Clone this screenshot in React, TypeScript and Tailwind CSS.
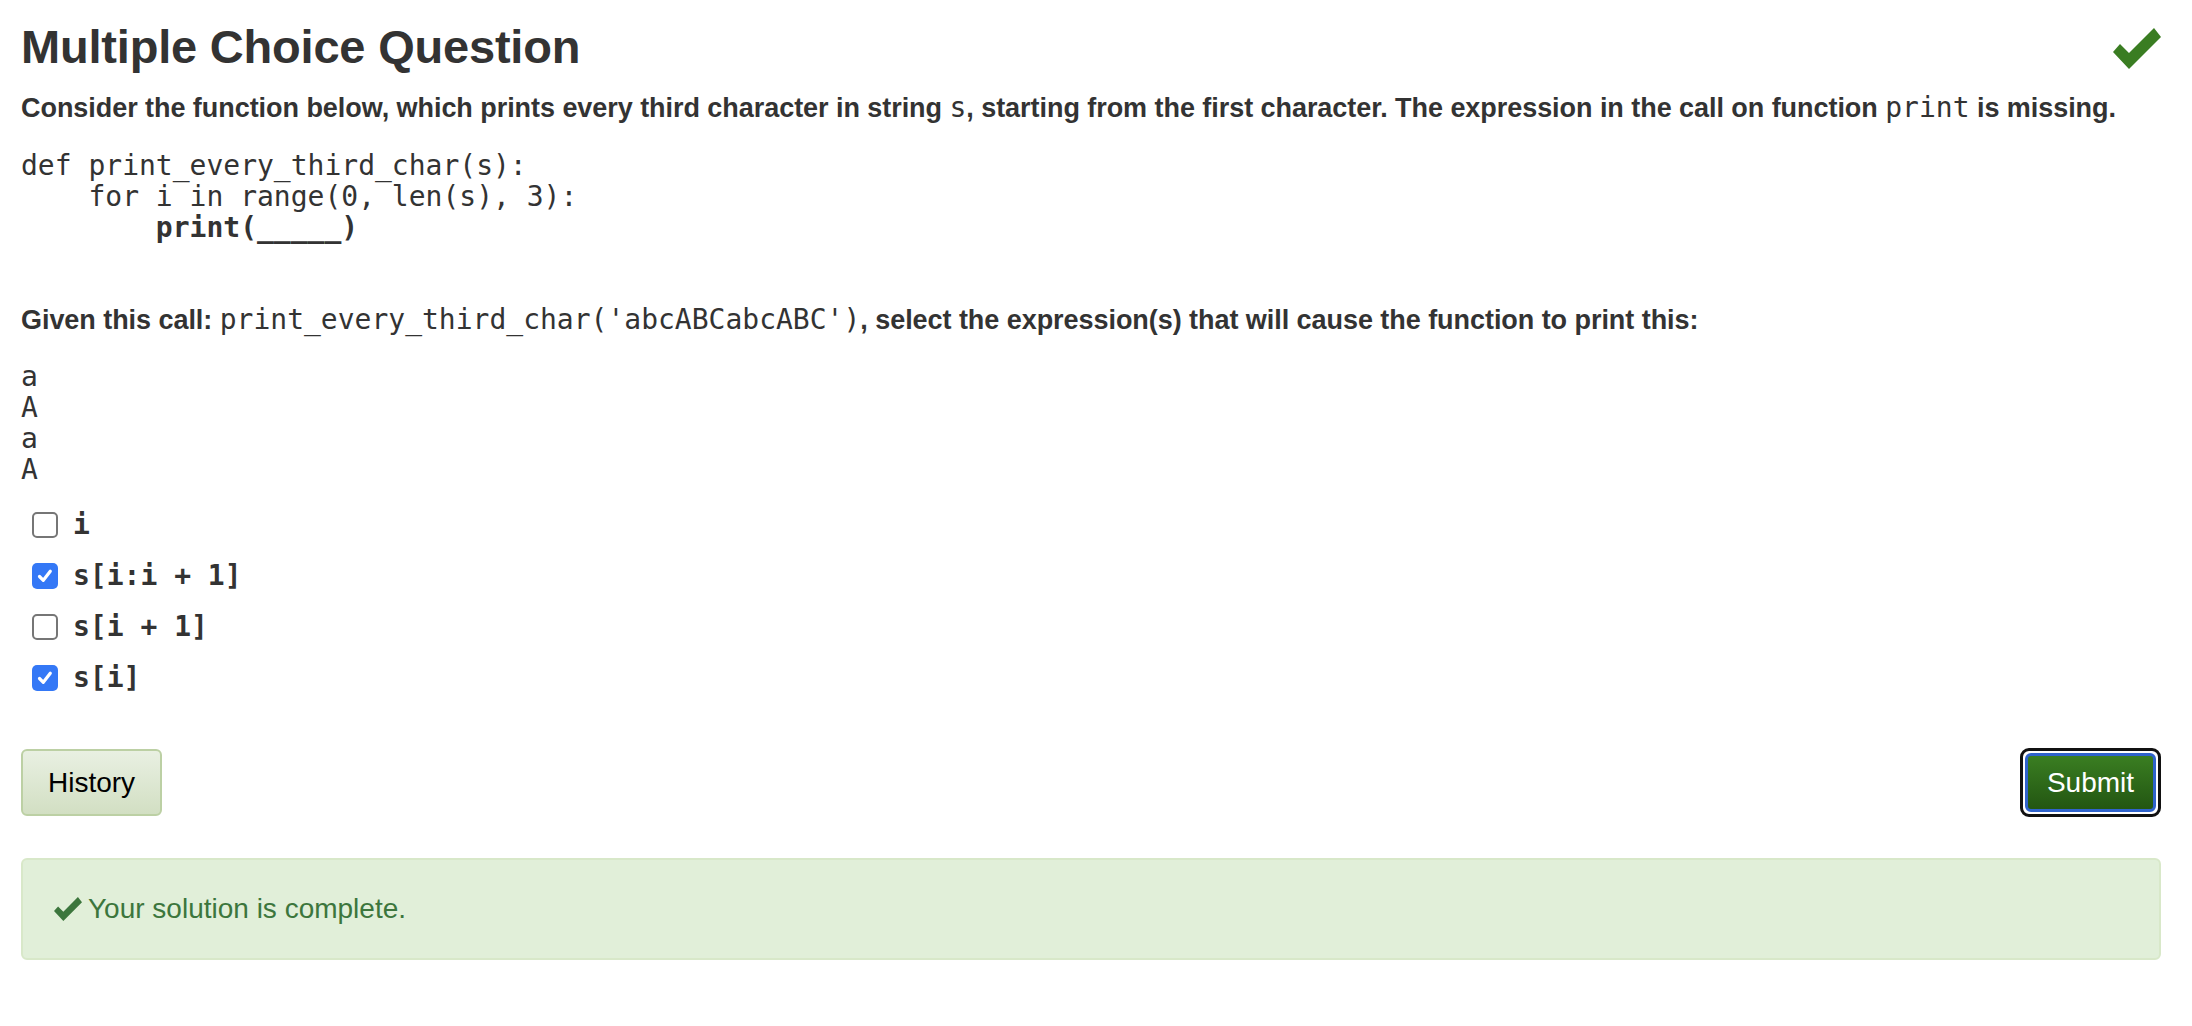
import React from "react";

const sans = { fontFamily: '"Liberation Sans", Arial, Helvetica, sans-serif' };
const mono = { fontFamily: '"DejaVu Sans Mono", "Liberation Mono", monospace' };

function BigCheck() {
  return (
    <svg width="48" height="41" viewBox="0 0 48 41" className="mt-[9px]">
      <polygon points="7,16 0,24 16,41 48,9 41,0 16,25" fill="#3a7d22" />
    </svg>
  );
}

function SmallCheck() {
  return (
    <svg width="28" height="24" viewBox="0 0 48 41" className="shrink-0">
      <polygon points="7,16 0,24 16,41 48,9 41,0 16,25" fill="#3c763d" />
    </svg>
  );
}

function Box({ checked }: { checked: boolean }) {
  if (checked) {
    return (
      <span className="flex h-[26px] w-[26px] items-center justify-center rounded-[5px] bg-[#3478f6]">
        <svg width="18" height="18" viewBox="0 0 18 18">
          <path d="M3.5 9.5 L7.3 13.3 L14.3 4.3" stroke="white" strokeWidth="3.2" fill="none" strokeLinecap="round" strokeLinejoin="round" />
        </svg>
      </span>
    );
  }
  return <span className="block h-[26px] w-[26px] rounded-[5px] border-2 border-[#767676] bg-white" />;
}

const options = [
  { label: "i", checked: false },
  { label: "s[i:i + 1]", checked: true },
  { label: "s[i + 1]", checked: false },
  { label: "s[i]", checked: true },
];

export default function App() {
  return (
    <div className="min-h-screen bg-white pl-[21px] pr-[31px] pt-[19px] text-[#333]" style={sans}>
      <div className="flex items-start justify-between">
        <h1 className="text-[47px] font-bold leading-[56px] tracking-[-0.2px]">Multiple Choice Question</h1>
        <BigCheck />
      </div>

      <p className="mt-[17px] text-[27px] font-bold leading-[32px] tracking-[-0.05px]">
        Consider the function below, which prints every third character in string{" "}
        <code className="text-[28px] font-normal tracking-normal" style={mono}>s</code>, starting from the first character. The
        expression in the call on function{" "}
        <code className="text-[28px] font-normal tracking-normal" style={mono}>print</code> is missing.
      </p>

      <pre className="mt-[26px] text-[28px] leading-[31px]" style={mono}>
        {"def print_every_third_char(s):\n    for i in range(0, len(s), 3):\n        "}
        <b>print(_____)</b>
      </pre>

      <p className="mt-[61px] text-[27px] font-bold leading-[32px] tracking-[-0.05px]">
        Given this call:{" "}
        <code className="text-[28px] font-normal tracking-normal" style={mono}>print_every_third_char('abcABCabcABC')</code>,
        select the expression(s) that will cause the function to print this:
      </p>

      <pre className="mt-[25px] text-[28px] leading-[31px]" style={mono}>
        {"a\nA\na\nA"}
      </pre>

      <div className="mt-[14px] flex flex-col">
        {options.map((o) => (
          <label key={o.label} className="flex h-[51px] items-center pl-[11px]">
            <Box checked={o.checked} />
            <span className="ml-[15px] whitespace-pre text-[28px] font-bold leading-[32px]" style={mono}>
              {o.label}
            </span>
          </label>
        ))}
      </div>

      <div className="mt-[45px] flex items-center justify-between">
        <button className="h-[67px] w-[141px] rounded-[6px] border-2 border-[#bcd0a4] bg-gradient-to-b from-[#e9f0e2] to-[#d2dfc3] text-[28px] text-black">
          History
        </button>
        <div className="rounded-[9px] border-[3px] border-[#111] bg-white p-[2px]">
          <button className="flex h-[59px] w-[131px] items-center justify-center rounded-[6px] border-[3px] border-[#2f63cc] bg-gradient-to-b from-[#3a7e22] to-[#235612] text-[28px] text-white">
            Submit
          </button>
        </div>
      </div>

      <div className="mt-[41px] flex h-[102px] items-center rounded-[6px] border-2 border-[#d8e8c9] bg-[#e1efd9] pl-[31px]">
        <SmallCheck />
        <span className="ml-[6px] text-[28px] text-[#3c763d]">Your solution is complete.</span>
      </div>
    </div>
  );
}
